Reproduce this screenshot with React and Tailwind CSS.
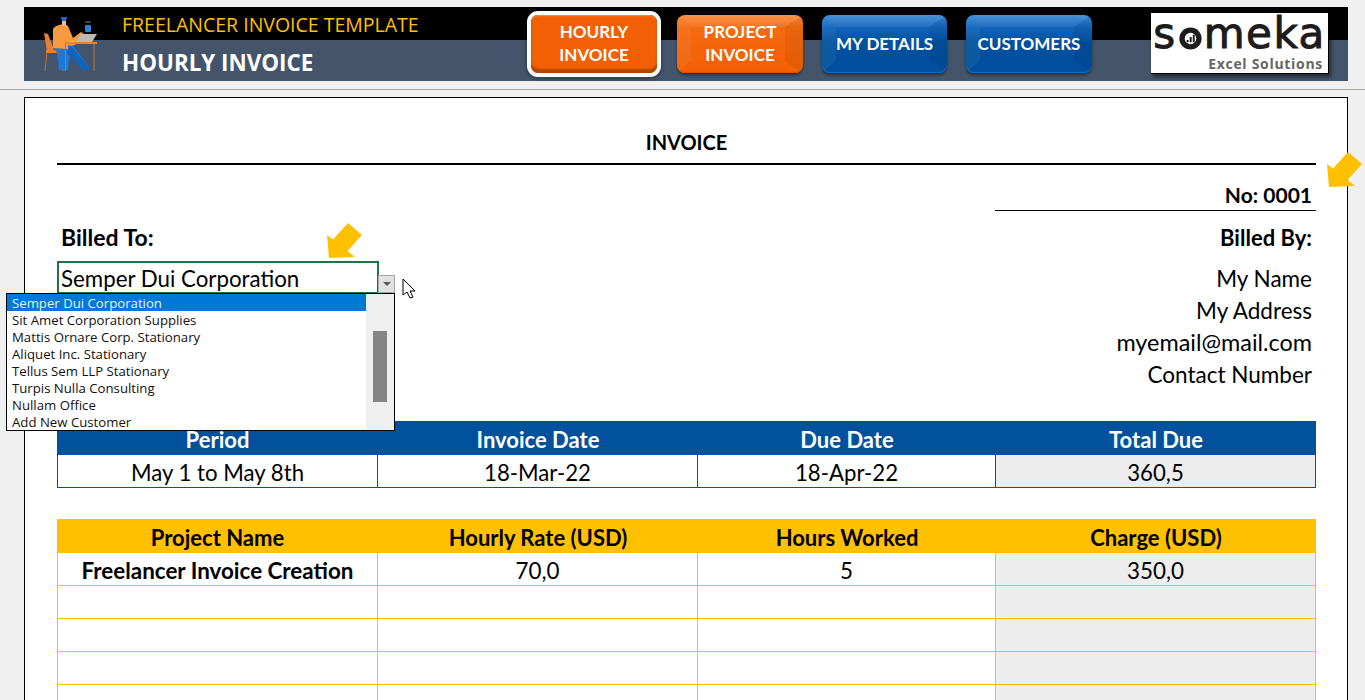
const dropdownItems = [
  'Sit Amet Corporation Supplies',
  'Mattis Ornare Corp. Stationary',
  'Aliquet Inc. Stationary',
  'Tellus Sem LLP Stationary',
  'Turpis Nulla Consulting',
  'Nullam Office',
  'Add New Customer',
];

const tableCols = 'grid grid-cols-[321px_320px_298px_320px]';

// the freelancer at his desk, top left of the banner
const Freelancer = () => (
  <svg width="56" height="58" viewBox="43 14 56 58" className="shrink-0">
    <path d="M44 32l4 1 6 16-7 1z" fill="#ed7d31" />
    <path d="M46 49h17v3H46z" fill="#ed7d31" />
    <path d="M47 52l-2 18M61 52l2 18" stroke="#c9702f" strokeWidth="1" />
    <path d="M53 45l17-1 4 2 16 21-7 3-13-16-2 15h-9l-2-17z" fill="#1f77d8" />
    <path d="M70 44l20 23-7 3-16-18z" fill="#1262b5" />
    <path d="M53 28c2-4 11-6 15-3l5 12 8-6 3 2-9 11c-3 1-5 1-7 0v4l-15-1z" fill="#f79a3e" />
    <path d="M62 20h4v5h-4z" fill="#f5b183" />
    <path d="M61 16h6l-1 4h-4z" fill="#1f6fd0" />
    <path d="M69 40h5v3h-5z" fill="#f4b6c2" />
    <path d="M81 33h16l-5 8H76z" fill="#b9b9b9" />
    <path d="M65 41h32v2H65z" fill="#ed7d31" />
    <path d="M65.5 43v27M94 43v27" stroke="#c9702f" strokeWidth="1" />
    <rect x="85" y="24" width="6" height="7" rx="1" fill="#2f7fd6" />
    <path d="M86 20v2M88 20v2M90 20v2" stroke="#7f7f7f" strokeWidth="1" />
  </svg>
);

const NavButton = ({ children, color, className }) => {
  const fill = {
    active: 'bg-[#f25f05] shadow-[inset_0_-4px_2px_#b04800,inset_0_1px_1px_#ff8a3c]',
    orange: 'bg-[linear-gradient(to_bottom,#fa8c3c_0,#f56a10_22%,#f25f05_100%)] shadow-[inset_0_-1px_1px_#d85400,0_2px_3px_rgba(0,0,0,0.45)]',
    blue: 'bg-[linear-gradient(to_bottom,#3d8ada_0,#1263b8_22%,#02509f_48%,#014f9d_100%)] shadow-[inset_0_-1px_1px_#1b6bbb,0_2px_3px_rgba(0,0,0,0.45)]',
  }[color];
  return (
    <div className={`relative flex h-[58px] items-center justify-center overflow-hidden rounded-lg text-center text-[17px] leading-[23px] font-bold text-white ${fill} ${className}`}>
      {color !== 'active' && (
        <svg viewBox="0 0 126 58" preserveAspectRatio="none" className="absolute inset-0 h-full w-full">
          <path d="M0 0h126l-18 12H14z" fill="#fff" fillOpacity="0.06" />
          <path d="M0 0l14 12v34L0 58z" fill="#fff" fillOpacity="0.05" />
          <path d="M126 0l-18 12v34l18 12z" fill="#000" fillOpacity="0.05" />
        </svg>
      )}
      <div className="relative mb-[2px]">{children}</div>
    </div>
  );
};

const Arrow = ({ className }) => (
  <svg width="37" height="37" viewBox="0 0 37 37" className={`absolute ${className}`}>
    <path d="M22 1l14 12-14.500 16 7.500 6-26 1-2-23 6 4.500z" fill="#ffc000" />
  </svg>
);

const App = () => {
  return (
    <div className="relative h-[700px] w-[1365px] overflow-hidden bg-[#f0f0f0] font-['Lato','Liberation_Sans',sans-serif] text-black">
      {/* banner */}
      <div className="mx-[24px] mt-[7px] h-[74px] w-[1324px] bg-[linear-gradient(to_bottom,#000_0,#000_33px,#44546a_33px,#44546a_100%)]">
        <div className="flex h-full items-center">
          <div className="ml-[19px] w-[79px]">
            <Freelancer />
          </div>
          <div className="w-[405px] font-['Open_Sans',sans-serif]">
            <div className="text-[19.500px] leading-[36px] text-[#ffc000]">FREELANCER INVOICE TEMPLATE</div>
            <div className="text-[22.400px] leading-[39px] font-bold text-white">HOURLY INVOICE</div>
          </div>
          <div className="rounded-[11px] border-4 border-white shadow-[0_1px_4px_rgba(0,0,0,0.4)]">
            <NavButton color="active" className="w-[126px]">
              HOURLY<br />INVOICE
            </NavButton>
          </div>
          <NavButton color="orange" className="ml-[16px] w-[126px]">
            PROJECT<br />INVOICE
          </NavButton>
          <NavButton color="blue" className="ml-[19px] w-[125px]">MY DETAILS</NavButton>
          <NavButton color="blue" className="ml-[19px] w-[126px]">CUSTOMERS</NavButton>
          {/* logo */}
          <div className="mt-[-1px] ml-[59px] flex h-[61px] w-[178px] flex-col border-r border-b border-black bg-white shadow-[2px_3px_4px_rgba(0,0,0,0.5)]">
            <div className="flex h-[42px] items-center justify-center font-['DejaVu_Sans',sans-serif] text-[42px] leading-[42px] tracking-[1.500px] text-[#1c1c1c] [-webkit-text-stroke:1px_#1c1c1c]">
              <span>s</span>
              <svg width="23" height="23" viewBox="0 0 30 30" className="mx-[2px] mt-[9px]">
                <circle cx="15" cy="15" r="14.500" fill="#1c1c1c" />
                <circle cx="15" cy="15" r="7.500" fill="#fff" />
                <path d="M10 17h2.500v3H10zM14 13h2.500v7H14zM18 10h2.500v10H18z" fill="#1c1c1c" />
              </svg>
              <span>meka</span>
            </div>
            <div className="pr-[5px] text-right font-['Open_Sans',sans-serif] text-[14px] leading-[17px] font-bold tracking-[0.7px] text-[#666]">Excel Solutions</div>
          </div>
        </div>
      </div>

      <div className="mt-[8px] h-px bg-[#a6a6a6]" />

      {/* sheet */}
      <div className="mx-[24px] mt-[7px] w-[1324px] border border-black bg-white pr-[31px] pl-[32px]">
        <div className="h-[67px] border-b-2 border-black pt-[29px] text-center text-[20px] leading-[30px] font-bold">INVOICE</div>

        <div className="flex justify-end">
          <div className="h-[46px] w-[321px] border-b border-black pt-[15px] pr-[4px] text-right text-[21px] leading-[30px] font-bold">No: 0001</div>
        </div>

        <div className="flex justify-between pt-[12px]">
          <div className="w-[322px]">
            <div className="pl-[4px] text-[23px] leading-[28px] font-bold">Billed To:</div>
            <div className="mt-[10px] h-[33px] border-2 border-[#217346] pl-[2px] text-[22.300px] leading-[32px]">Semper Dui Corporation</div>
          </div>
          <div className="pr-[4px] text-right text-[22.500px] leading-[32px]">
            <div className="mb-[10px] text-[22px] leading-[30px] font-bold">Billed By:</div>
            <div>My Name</div>
            <div>My Address</div>
            <div className="h-[32px] text-[23.400px] leading-[30px]">myemail@mail.com</div>
            <div>Contact Number</div>
          </div>
        </div>

        {/* period table */}
        <div className={`mt-[30px] ${tableCols} h-[34px] grid-rows-[34px] bg-[#01519c] text-center text-[22px] leading-[37px] font-bold text-white`}>
          <div>Period</div>
          <div>Invoice Date</div>
          <div>Due Date</div>
          <div>Total Due</div>
        </div>
        <div className={`${tableCols} h-[33px] grid-rows-[32px] border-b border-[#01519c] text-center text-[22.200px] leading-[36px]`}>
          <div className="border-x border-[#01519c]">May 1 to May 8th</div>
          <div className="border-r border-[#01519c]">18-Mar-22</div>
          <div className="border-r border-[#01519c]">18-Apr-22</div>
          <div className="border-r border-[#01519c] bg-[#ededed]">360,5</div>
        </div>

        {/* projects table */}
        <div className={`mt-[31px] ${tableCols} h-[34px] grid-rows-[34px] bg-[#ffc000] text-center text-[22px] leading-[37px] font-bold`}>
          <div>Project Name</div>
          <div>Hourly Rate (USD)</div>
          <div>Hours Worked</div>
          <div>Charge (USD)</div>
        </div>
        <div className={`${tableCols} h-[33px] grid-rows-[32px] border-b border-[#ffc000] text-center text-[22.400px] leading-[35px]`}>
          <div className="border-x border-[#ffc000] font-bold">Freelancer Invoice Creation</div>
          <div className="border-r border-[#ffc000]">70,0</div>
          <div className="border-r border-[#ffc000]">5</div>
          <div className="border-r border-[#ffc000] bg-[#ededed]">350,0</div>
        </div>
        {[0, 1, 2, 3].map((row) => (
          <div key={row} className={`${tableCols} h-[33px] grid-rows-[32px] border-b border-[#ffc000]`}>
            <div className="border-x border-[#ffc000]" />
            <div className="border-r border-[#ffc000]" />
            <div className="border-r border-[#ffc000]" />
            <div className="border-r border-[#ffc000] bg-[#ededed]" />
          </div>
        ))}
      </div>

      {/* overlays: hint arrows and the open list on the Billed To cell */}
      <Arrow className="top-[151px] left-[1326px]" />
      <Arrow className="top-[222px] left-[326px]" />
      <div className="absolute top-[275px] left-[378px] flex h-[18px] w-[17px] items-center justify-center border border-[#a6a6a6] bg-[#e1e1e1]">
        <div className="h-0 w-0 border-x-[4px] border-t-[4px] border-x-transparent border-t-[#555]" />
      </div>
      <svg width="16" height="22" viewBox="0 0 16 22" className="absolute top-[278px] left-[402px]">
        <path d="M1 1v16l4-3 3 6 3-1-3-6h5z" fill="#fff" stroke="#000" strokeWidth="1" />
      </svg>
      <div className="absolute top-[293px] left-[6px] flex h-[138px] w-[389px] border border-black bg-white font-['Open_Sans',sans-serif] text-[13.200px] leading-[19px] text-[#111]">
        <div className="flex-1">
          <div className="h-[17px] bg-[#0078d7] pl-[5px] text-[#e8f2fb]">Semper Dui Corporation</div>
          {dropdownItems.map((item) => (
            <div key={item} className="h-[17px] pl-[5px]">{item}</div>
          ))}
        </div>
        <div className="w-[28px] bg-[#f0f0f0] px-[7px] pt-[37px]">
          <div className="h-[71px] bg-[#868686]" />
        </div>
      </div>
    </div>
  );
};

export default App;
